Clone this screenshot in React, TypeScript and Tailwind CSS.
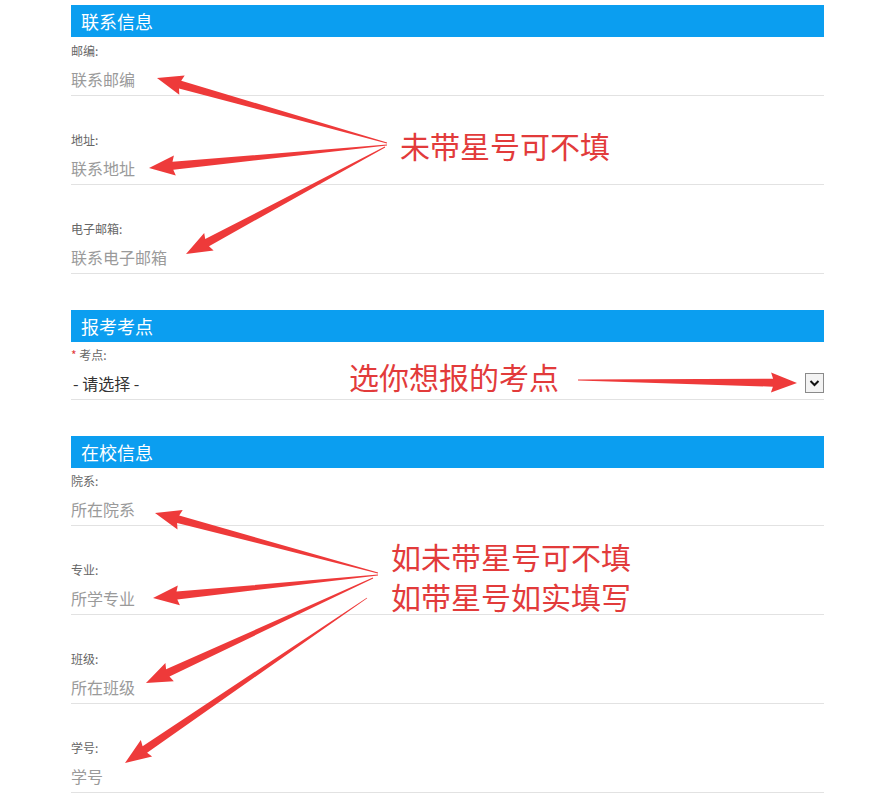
import React from 'react';

type Pt = [number, number];

// tapered annotation arrow: thin at the tail, wide shaft into a triangle head
const arrowPoints = (tail: Pt, tip: Pt, headLen = 24, headHalf = 10, shaftHalf = 4) => {
  const dx = tip[0] - tail[0];
  const dy = tip[1] - tail[1];
  const len = Math.hypot(dx, dy);
  const ux = dx / len;
  const uy = dy / len;
  const px = -uy;
  const py = ux;
  const bx = tip[0] - ux * headLen;
  const by = tip[1] - uy * headLen;
  const pts: Pt[] = [
    [tail[0] + px * 0.4, tail[1] + py * 0.4],
    [bx + px * shaftHalf, by + py * shaftHalf],
    [bx + px * headHalf - ux * 2, by + py * headHalf - uy * 2],
    tip,
    [bx - px * headHalf - ux * 2, by - py * headHalf - uy * 2],
    [bx - px * shaftHalf, by - py * shaftHalf],
    [tail[0] - px * 0.4, tail[1] - py * 0.4],
  ];
  return pts.map((p) => `${p[0].toFixed(1)},${p[1].toFixed(1)}`).join(' ');
};

const arrows: { tail: Pt; tip: Pt }[] = [
  { tail: [387, 143], tip: [157, 78] },
  { tail: [387, 145], tip: [149, 168] },
  { tail: [385, 147], tip: [186, 254] },
  { tail: [378, 573], tip: [155, 513] },
  { tail: [378, 575], tip: [153, 598] },
  { tail: [373, 578], tip: [146, 683] },
  { tail: [367, 598], tip: [125, 763] },
  { tail: [578, 380], tip: [797, 383] },
];

const Header = ({ title, className = '' }: { title: string; className?: string }) => (
  <div className={`${className} h-[32px] bg-[#0b9ef0] pl-[10px] text-[18px] leading-[32px] text-white`}>
    {title}
  </div>
);

const Field = ({ label, placeholder, className = 'mt-[36px]' }: { label: string; placeholder: string; className?: string }) => (
  <div className={className}>
    <div className="h-4 text-[12px] leading-4 text-[#666]">{label}:</div>
    <div className="mt-1 h-[33px] border-b border-[#e2e2e2] text-[16px] leading-[32px] text-[#9a9a9a]">
      {placeholder}
    </div>
  </div>
);

const App = () => {
  return (
    <div
      className="relative h-[811px] w-[892px] overflow-hidden bg-white"
      style={{ fontFamily: '"Noto Sans CJK SC", "Noto Sans", sans-serif' }}
    >
      <div className="ml-[71px] w-[753px] pt-[5px]">
        <Header title="联系信息" />
        <Field label="邮编" placeholder="联系邮编" className="mt-[6px]" />
        <Field label="地址" placeholder="联系地址" />
        <Field label="电子邮箱" placeholder="联系电子邮箱" />

        <Header title="报考考点" className="mt-[36px]" />
        <div className="mt-[5px]">
          <div className="h-4 text-[12px] leading-4 text-[#666]">
            <span className="text-[#e23b3b]">*</span> 考点:
          </div>
          <div className="mt-1 flex h-[33px] items-center justify-between border-b border-[#e2e2e2]">
            <span className="pl-[2px] text-[16px] text-[#333]">- 请选择 -</span>
            <span className="flex h-5 w-[19px] items-center justify-center border border-[#8a8a8a] bg-[#f3f3f3]">
              <svg width="11" height="8" viewBox="0 0 11 8">
                <path d="M1.5 2 L5.5 6 L9.5 2" fill="none" stroke="#111" strokeWidth="2" />
              </svg>
            </span>
          </div>
        </div>

        <Header title="在校信息" className="mt-[36px]" />
        <Field label="院系" placeholder="所在院系" className="mt-[5px]" />
        <Field label="专业" placeholder="所学专业" />
        <Field label="班级" placeholder="所在班级" />
        <Field label="学号" placeholder="学号" />
      </div>

      {/* annotations laid over the form */}
      <svg className="pointer-events-none absolute left-0 top-0" width="892" height="811">
        {arrows.map((a, i) => (
          <polygon key={i} points={arrowPoints(a.tail, a.tip)} fill="#ee3a3a" />
        ))}
      </svg>
      <div className="absolute left-[400px] top-[126px] text-[30px] leading-[38px] text-[#e23b3b]">未带星号可不填</div>
      <div className="absolute left-[349px] top-[357px] text-[30px] leading-[38px] text-[#e23b3b]">选你想报的考点</div>
      <div className="absolute left-[391px] top-[536px] text-[30px] leading-[40px] text-[#e23b3b]">
        <div>如未带星号可不填</div>
        <div>如带星号如实填写</div>
      </div>
    </div>
  );
};

export default App;
